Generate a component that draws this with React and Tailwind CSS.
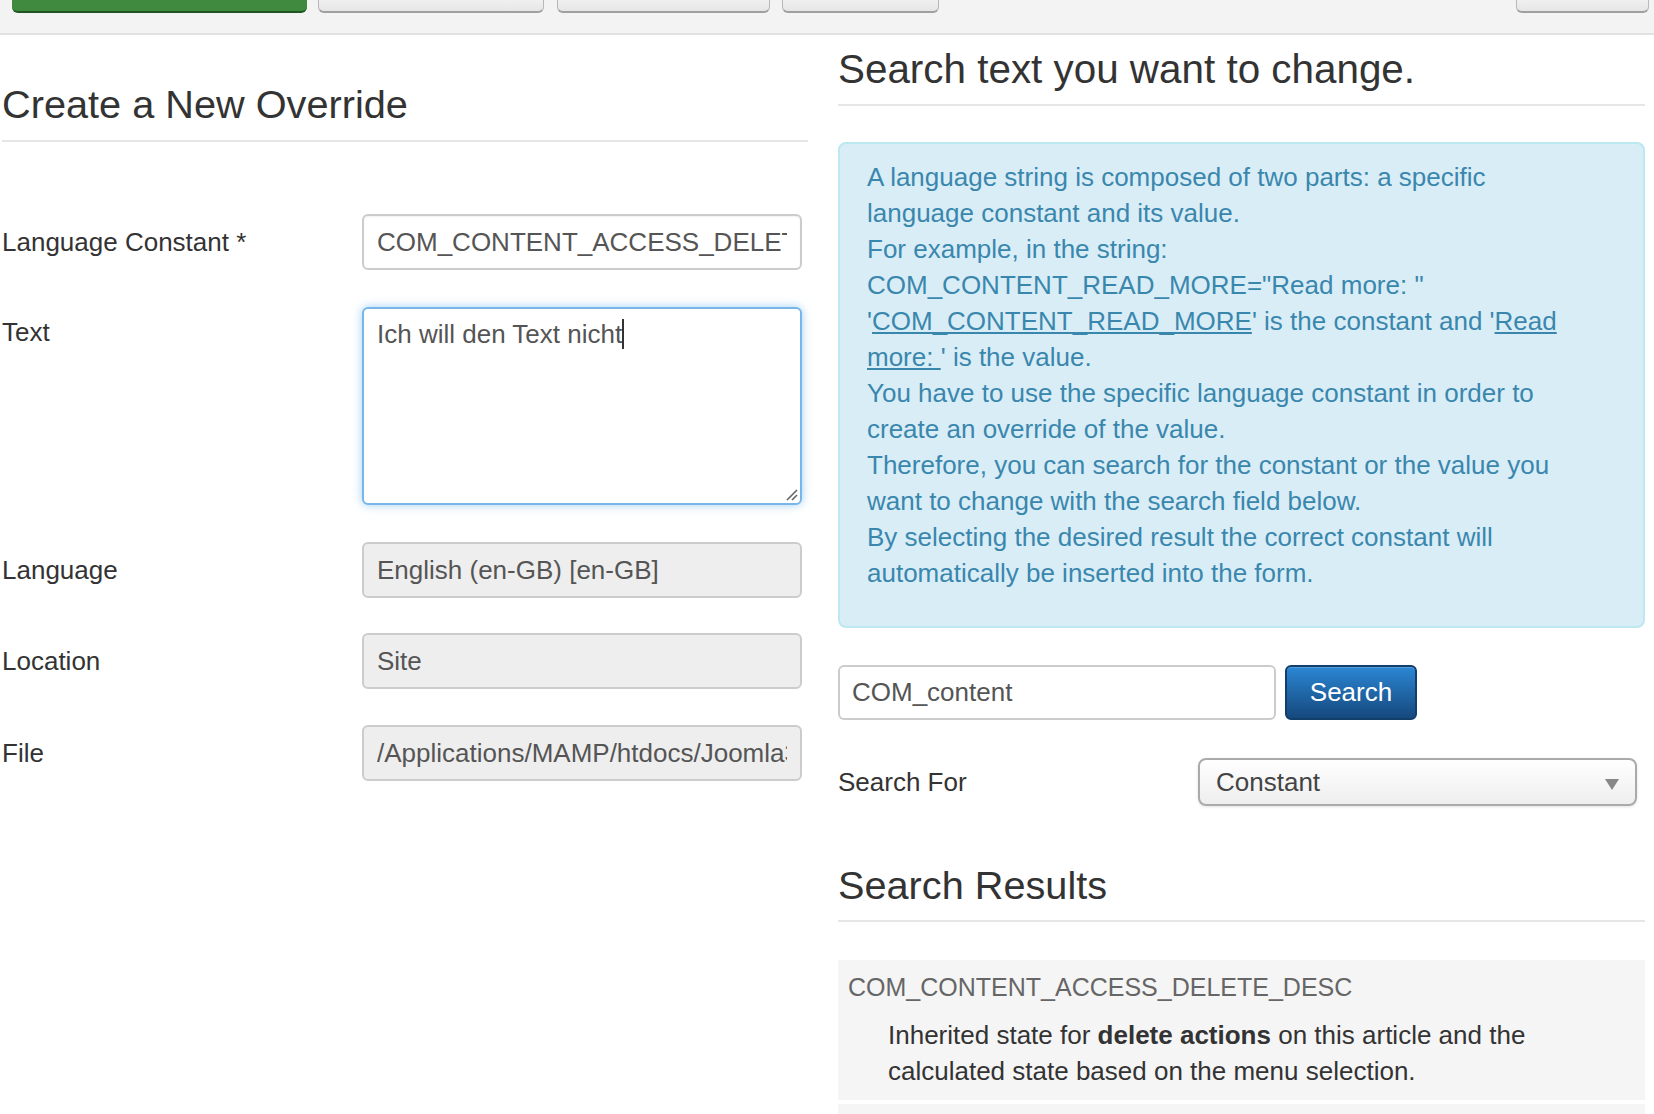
import { useState } from 'react';

const font = { fontFamily: '"Liberation Sans", Arial, Helvetica, sans-serif' };

function Toolbar() {
  return (
    <div className="relative h-[35px] bg-[#f3f3f3] border-b-2 border-[#e2e2e2]">
      <div className="absolute left-[12px] top-0 h-[13px] w-[295px] rounded-b-[6px] bg-[#3f8a3e] border-b-2 border-[#1f5520]" />
      <div className="absolute left-[318px] top-0 h-[13px] w-[226px] rounded-b-[6px] bg-gradient-to-b from-[#f0f0f0] to-[#e6e6e6] border border-t-0 border-[#b8b8b8] border-b-2 border-b-[#a0a0a0]" />
      <div className="absolute left-[557px] top-0 h-[13px] w-[213px] rounded-b-[6px] bg-gradient-to-b from-[#f0f0f0] to-[#e6e6e6] border border-t-0 border-[#b8b8b8] border-b-2 border-b-[#a0a0a0]" />
      <div className="absolute left-[782px] top-0 h-[13px] w-[157px] rounded-b-[6px] bg-gradient-to-b from-[#f0f0f0] to-[#e6e6e6] border border-t-0 border-[#b8b8b8] border-b-2 border-b-[#a0a0a0]" />
      <div className="absolute left-[1516px] top-0 h-[13px] w-[133px] rounded-b-[6px] bg-gradient-to-b from-[#f0f0f0] to-[#e6e6e6] border border-t-0 border-[#b8b8b8] border-b-2 border-b-[#a0a0a0]" />
    </div>
  );
}

function FieldRow({ label, children, top = false }) {
  return (
    <div className={`flex ${top ? 'items-start' : 'items-center'}`}>
      <label className={`w-[360px] shrink-0 text-[26px] leading-[36px] text-[#333] ${top ? 'pt-[7px]' : ''}`}>
        {label}
      </label>
      {children}
    </div>
  );
}

function TextInput({ value, disabled }) {
  return (
    <input
      readOnly
      value={value}
      style={font}
      className={`w-[440px] h-[56px] rounded-[6px] border-2 border-[#cccccc] px-[13px] text-[26px] text-[#555] outline-none ${
        disabled ? 'bg-[#eeeeee]' : 'bg-white shadow-[inset_0_1px_2px_rgba(0,0,0,0.06)]'
      }`}
    />
  );
}

function OverrideForm() {
  return (
    <div className="w-[806px] shrink-0">
      <div className="mt-[47px] pb-[14px] border-b-2 border-[#e6e6e6]">
        <h1 className="text-[39.7px] leading-[44px] text-[#333]">Create a New Override</h1>
      </div>

      <div className="mt-[72px] flex flex-col">
        <FieldRow label="Language Constant *">
          <TextInput value="COM_CONTENT_ACCESS_DELETE_DESC" />
        </FieldRow>

        <div className="mt-[37px]">
          <FieldRow label="Text" top>
            <div className="relative w-[440px] h-[198px] rounded-[6px] border-2 border-[#78b6ea] bg-white shadow-[0_0_10px_rgba(82,168,236,0.55)] px-[13px] pt-[7px] text-[26px] leading-[36px] text-[#555]">
              Ich will den Text nicht
              <span className="inline-block w-[2px] h-[30px] bg-[#333] align-[-6px]" />
              <svg className="absolute right-[2px] bottom-[2px]" width="14" height="14" viewBox="0 0 14 14">
                <path d="M13 3 L3 13 M13 8 L8 13" stroke="#666" strokeWidth="1.6" fill="none" />
              </svg>
            </div>
          </FieldRow>
        </div>

        <div className="mt-[37px]">
          <FieldRow label="Language">
            <TextInput value="English (en-GB) [en-GB]" disabled />
          </FieldRow>
        </div>

        <div className="mt-[35px]">
          <FieldRow label="Location">
            <TextInput value="Site" disabled />
          </FieldRow>
        </div>

        <div className="mt-[36px]">
          <FieldRow label="File">
            <TextInput value="/Applications/MAMP/htdocs/Joomla3/language/overrides/en-GB.override.ini" disabled />
          </FieldRow>
        </div>
      </div>
    </div>
  );
}

function SearchPanel() {
  const [query] = useState('COM_content');

  return (
    <div className="w-[807px] shrink-0">
      <div className="mt-[12px] pb-[13px] border-b-2 border-[#e6e6e6]">
        <h2 className="text-[40.4px] leading-[44px] text-[#333]">Search text you want to change.</h2>
      </div>

      <div className="mt-[36px] h-[486px] rounded-[8px] border-2 border-[#bce8f1] bg-[#d9edf7] pl-[27px] pr-[70px] pt-[15px] text-[26px] leading-[36px] text-[#3a87ad]">
        <p>A language string is composed of two parts: a specific language constant and its value.</p>
        <p>For example, in the string:</p>
        <p>COM_CONTENT_READ_MORE="Read more: "</p>
        <p>
          '<a className="underline">COM_CONTENT_READ_MORE</a>' is the constant and '<a className="underline">Read more: </a>' is the value.
        </p>
        <p>You have to use the specific language constant in order to create an override of the value.</p>
        <p>Therefore, you can search for the constant or the value you want to change with the search field below.</p>
        <p>By selecting the desired result the correct constant will automatically be inserted into the form.</p>
      </div>

      <div className="mt-[37px] flex items-center gap-[9px]">
        <input
          readOnly
          value={query}
          style={font}
          className="w-[438px] h-[55px] rounded-[6px] border-2 border-[#cccccc] bg-white px-[12px] text-[26px] text-[#555] outline-none"
        />
        <button className="w-[132px] h-[55px] rounded-[6px] border-2 border-[#123e6b] bg-gradient-to-b from-[#2b87d4] to-[#16497e] text-[26px] text-white shadow-[inset_0_1px_0_rgba(255,255,255,0.2)]">
          Search
        </button>
      </div>

      <div className="mt-[38px] flex items-center">
        <span className="w-[360px] text-[26px] leading-[36px] text-[#333]">Search For</span>
        <div className="relative w-[439px] h-[48px] rounded-[8px] border-2 border-[#aaaaaa] bg-gradient-to-b from-white to-[#eeeeee] shadow-[0_1px_3px_rgba(0,0,0,0.12)] pl-[16px] flex items-center text-[26px] text-[#444]">
          Constant
          <svg className="absolute right-[16px] top-[19px]" width="14" height="11" viewBox="0 0 14 11">
            <path d="M0 0 H14 L7 11 Z" fill="#888" />
          </svg>
        </div>
      </div>

      <div className="mt-[57px] pb-[13px] border-b-2 border-[#e6e6e6]">
        <h2 className="text-[39.7px] leading-[44px] text-[#333]">Search Results</h2>
      </div>

      <div className="mt-[38px] flex flex-col gap-[4px]">
        <div className="bg-[#f5f5f5] pt-[9px] pb-[11px] px-[10px]">
          <div className="text-[25px] leading-[36px] text-[#666]">COM_CONTENT_ACCESS_DELETE_DESC</div>
          <div className="mt-[12px] pl-[40px] pr-[60px] text-[26px] leading-[36px] text-[#333]">
            Inherited state for <b>delete actions</b> on this article and the calculated state based on the menu selection.
          </div>
        </div>
        <div className="bg-[#f5f5f5] h-[60px]" />
      </div>
    </div>
  );
}

export default function App() {
  return (
    <div style={font} className="w-[1654px] h-[1114px] overflow-hidden bg-white">
      <Toolbar />
      <div className="flex gap-[30px] pl-[2px]">
        <OverrideForm />
        <SearchPanel />
      </div>
    </div>
  );
}
